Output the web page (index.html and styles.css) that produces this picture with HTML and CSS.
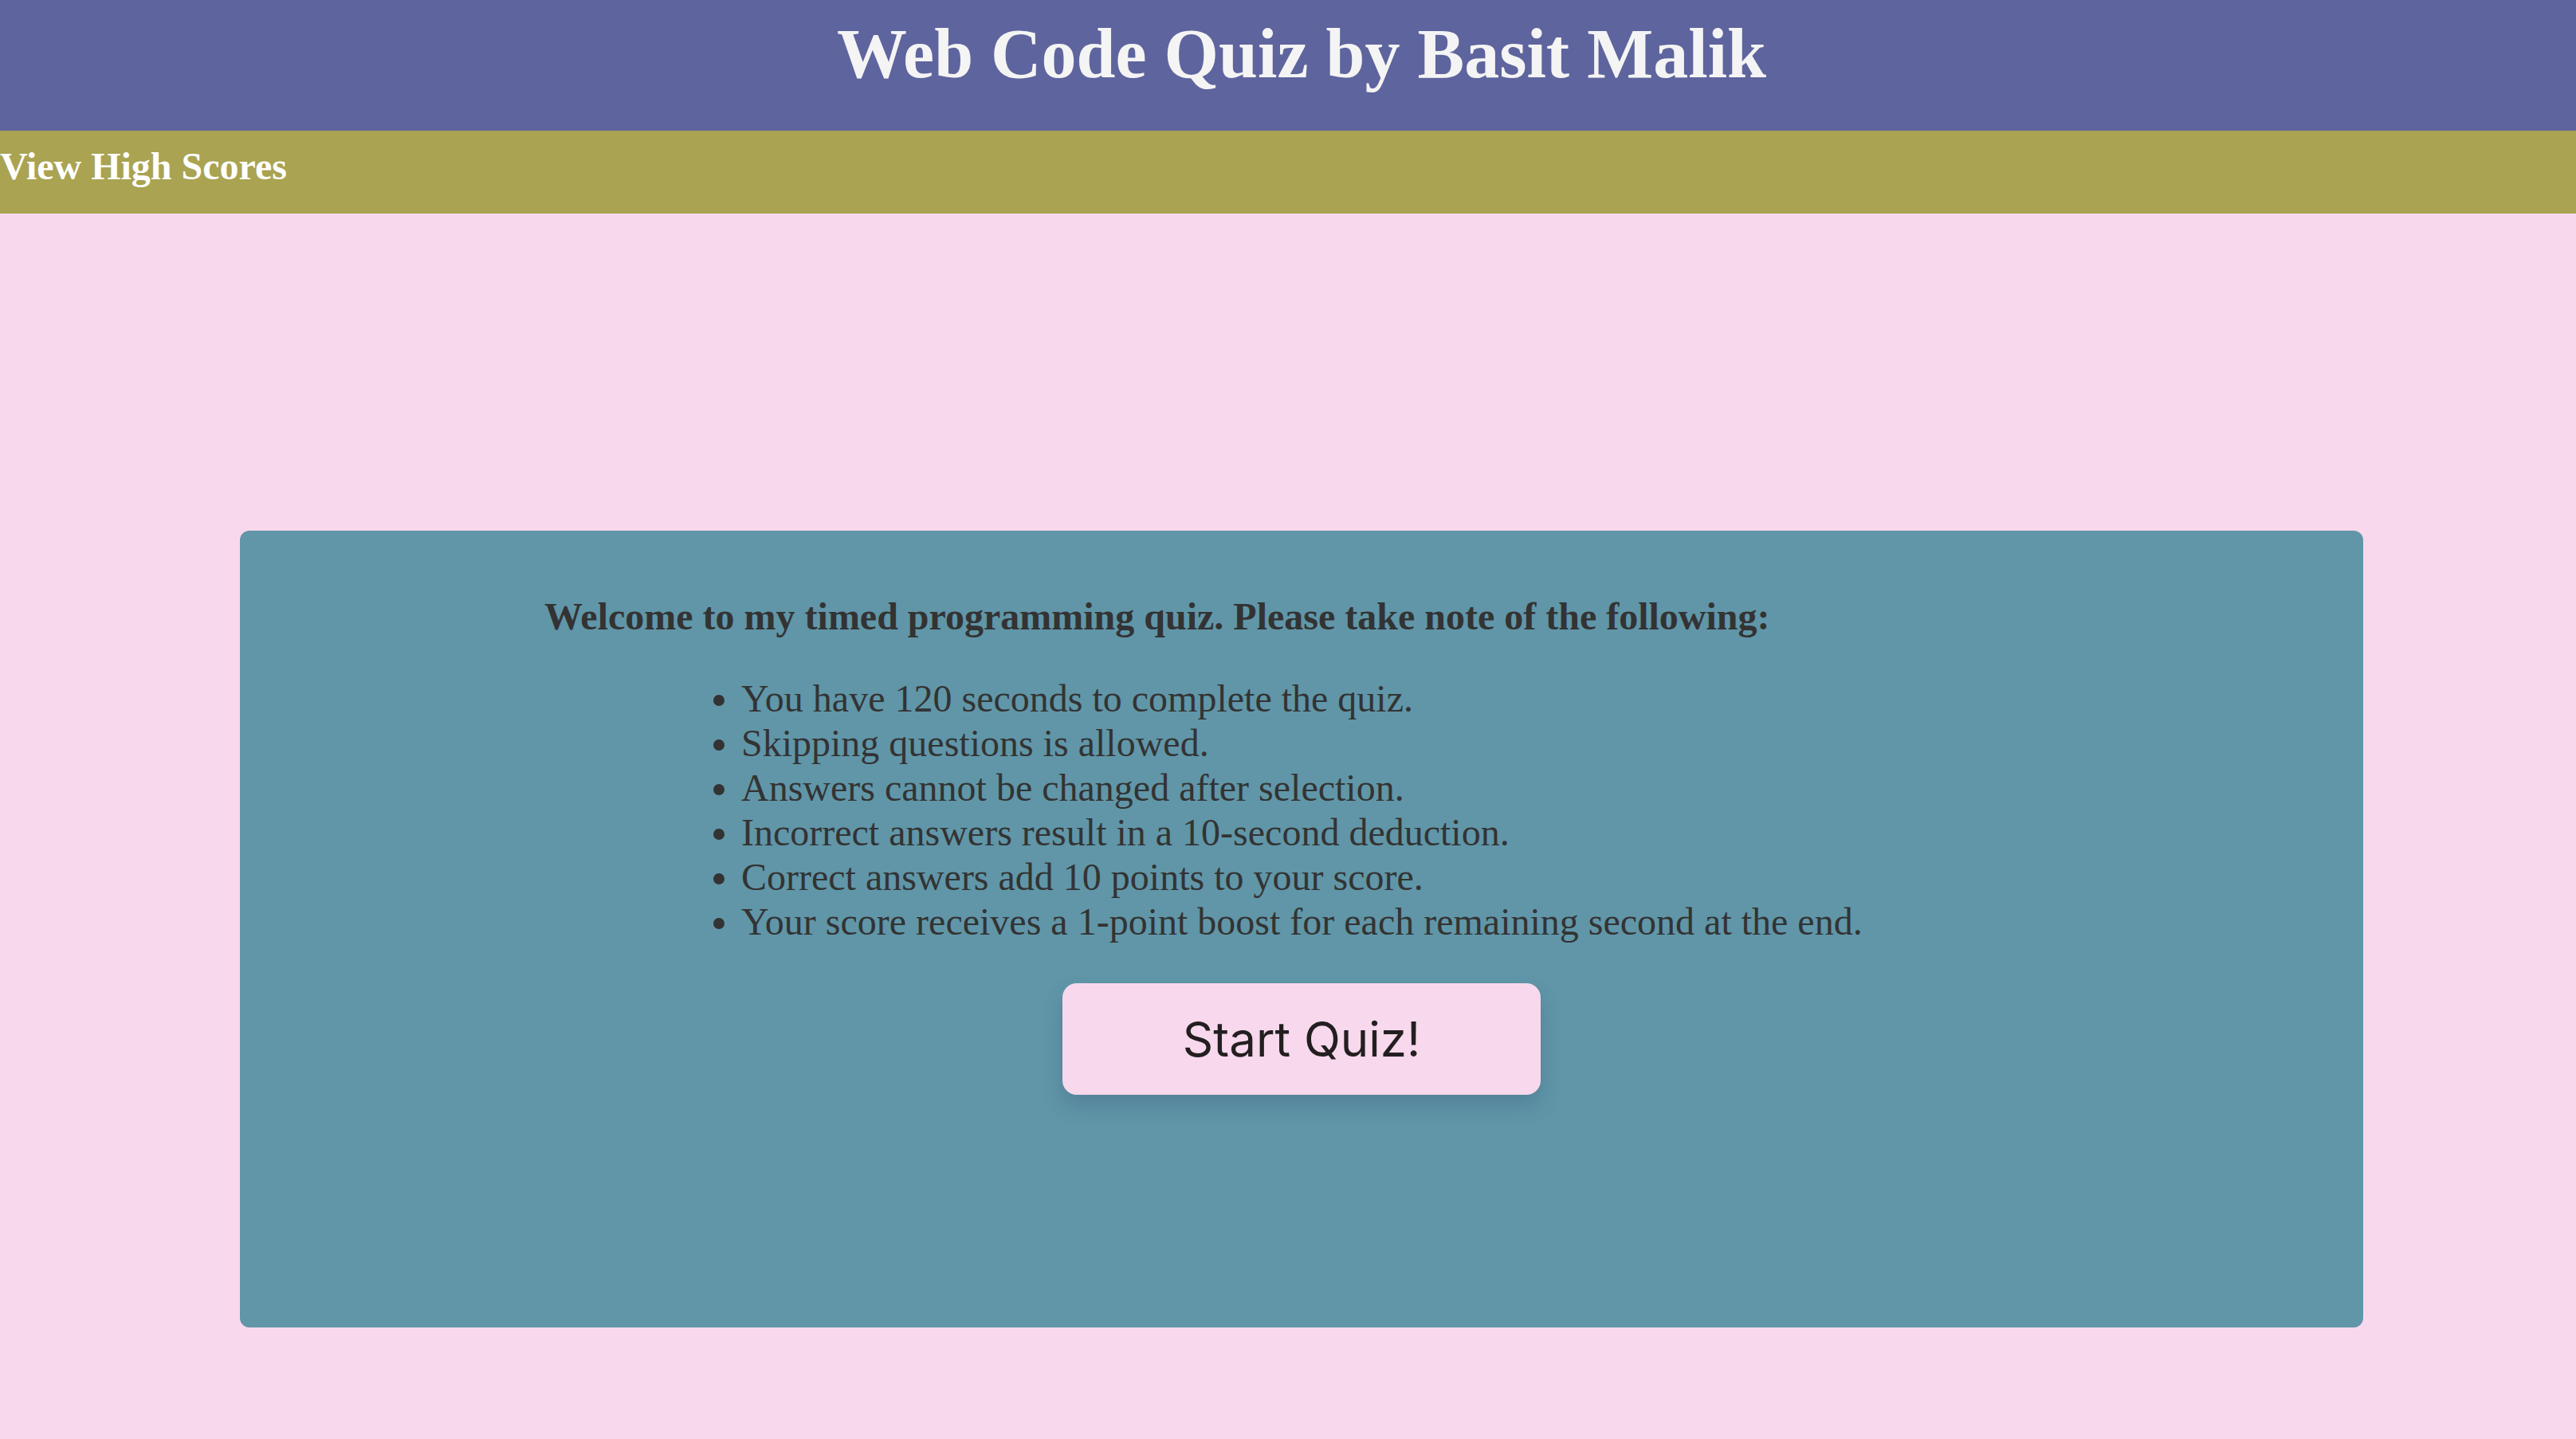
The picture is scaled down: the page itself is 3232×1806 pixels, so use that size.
FILE: index.html
```html
<!DOCTYPE html>
<html lang="en">
<head>
<meta charset="utf-8">
<title>Web Code Quiz</title>
<link rel="stylesheet" href="styles.css">
</head>
<body>
<header class="site-header">
  <h1 class="site-title">Web Code Quiz by Basit Malik</h1>
</header>
<nav class="score-bar">
  <a class="score-link" href="#">View High Scores</a>
</nav>
<main class="page">
  <section class="card">
    <h2 class="intro">Welcome to my timed programming quiz. Please take note of the following:</h2>
    <ul class="rules">
      <li>You have 120 seconds to complete the quiz.</li>
      <li>Skipping questions is allowed.</li>
      <li>Answers cannot be changed after selection.</li>
      <li>Incorrect answers result in a 10-second deduction.</li>
      <li>Correct answers add 10 points to your score.</li>
      <li>Your score receives a 1-point boost for each remaining second at the end.</li>
    </ul>
    <button class="start-btn" type="button">Start Quiz!</button>
  </section>
</main>
</body>
</html>
```
FILE: styles.css
```css
html, body {
  margin: 0;
  padding: 0;
}
body {
  background: #f8d8ed;
  font-family: "Liberation Serif", "Times New Roman", serif;
  min-height: 1806px;
}
.site-header {
  background: #5e649d;
  height: 164px;
  box-sizing: border-box;
  padding: 17px 0 0 34px;
}
.site-title {
  margin: 0;
  text-align: center;
  color: #f4f4f4;
  font-size: 88px;
  font-weight: bold;
  line-height: 101px;
}
.score-bar {
  background: #a9a352;
  height: 104px;
  box-sizing: border-box;
  padding-top: 17px;
}
.score-link {
  display: block;
  color: #ffffff;
  text-decoration: none;
  font-weight: bold;
  font-size: 48px;
  line-height: 55px;
}
.page {
  padding: 398px 0 0 301px;
}
.card {
  width: 2664px;
  height: 1000px;
  box-sizing: border-box;
  background: #6096a8;
  border-radius: 12px;
  padding: 80px 0 0 382px;
  color: #333333;
  display: flex;
  flex-direction: column;
}
.intro {
  margin: 0;
  font-size: 48px;
  font-weight: bold;
  line-height: 55px;
}
.rules {
  margin: 48px 0 0 0;
  padding-left: 247px;
  font-size: 48px;
  line-height: 56px;
}
.start-btn {
  align-self: flex-start;
  margin: 49px 0 0 650px;
  width: 600px;
  height: 140px;
  border: none;
  border-radius: 18px;
  background: #f8d8ec;
  color: #231f20;
  font-family: Inter, "Noto Sans", sans-serif;
  font-size: 60px;
  box-shadow: 0 14px 26px rgba(40, 60, 100, 0.22);
  cursor: pointer;
}
```
